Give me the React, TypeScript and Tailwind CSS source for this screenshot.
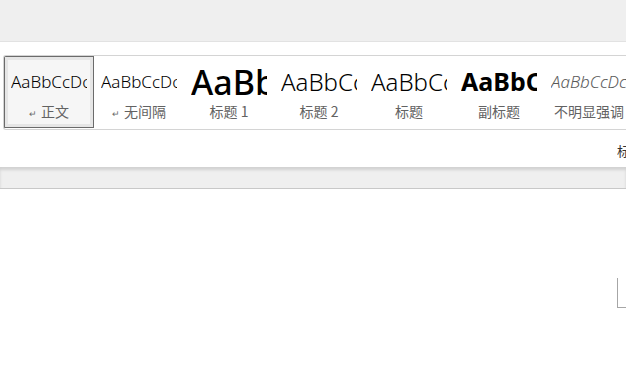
import React from "react";

const items = [
  { sample: "AaBbCcDc", cls: "text-[17px] font-light text-black", label: "正文", mark: true, selected: true },
  { sample: "AaBbCcDc", cls: "text-[17px] font-light text-black", label: "无间隔", mark: true },
  { sample: "AaBbCcDc", cls: "text-[34px] font-medium text-black", label: "标题 1" },
  { sample: "AaBbCcDc", cls: "text-[24px] font-light text-black", label: "标题 2" },
  { sample: "AaBbCcDc", cls: "text-[24px] font-light text-black", label: "标题" },
  { sample: "AaBbCcDc", cls: "text-[25px] font-bold text-black", label: "副标题" },
  { sample: "AaBbCcDc", cls: "text-[17px] font-light italic text-[#5a5a5a]", label: "不明显强调" },
];

export default function App() {
  return (
    <div
      className="w-[626px] h-[372px] overflow-hidden bg-white flex flex-col"
      style={{ fontFamily: '"Noto Sans", "Noto Sans CJK SC", sans-serif' }}
    >
      <div className="h-[42px] shrink-0 bg-[#efefef] border-b border-[#e2e2e2]" />
      <div className="h-[125px] shrink-0 bg-white flex flex-col pt-[13px] pl-[3px]">
        <div className="h-[75px] border border-r-0 border-[#d4d4d4] rounded-l-[3px] flex overflow-hidden">
          {items.map((it, i) => (
            <div
              key={i}
              className={
                "w-[90px] shrink-0 h-[72px] flex flex-col " +
                (it.selected
                  ? "border border-[#6b6b6b] bg-[#f6f6f6] outline outline-[3px] -outline-offset-4 outline-[#e6e6e6]"
                  : "border border-transparent")
              }
            >
              <div className="h-[45px] ml-[6px] w-[76px] flex items-center overflow-hidden pt-[4px]">
                <span className={"whitespace-nowrap leading-none " + it.cls}>{it.sample}</span>
              </div>
              <div className="h-[18px] flex items-center justify-center text-[14px] text-[#626262] whitespace-nowrap">
                {it.mark && <span className="text-[9px] mr-[4px] mt-[5px] text-[#6a6a6a]">↵</span>}
                <span style={{ fontFamily: '"Noto Sans CJK SC", sans-serif' }}>{it.label}</span>
              </div>
            </div>
          ))}
        </div>
        <div className="flex justify-end mt-[14px]">
          <span
            className="text-[13px] text-[#333] leading-none w-[9px] h-[14px] overflow-hidden whitespace-nowrap"
            style={{ fontFamily: '"Noto Sans CJK SC", sans-serif' }}
          >
            标
          </span>
        </div>
      </div>
      <div className="h-[22px] shrink-0 bg-[#efefef] border-b border-[#c8c8c8] shadow-[inset_0_3px_3px_rgba(0,0,0,0.12)]" />
      <div className="flex-1 bg-white pt-[89px] pl-[617px]">
        <div className="w-[9px] h-[30px] border-l border-b border-[#a6a6a6]" />
      </div>
    </div>
  );
}
